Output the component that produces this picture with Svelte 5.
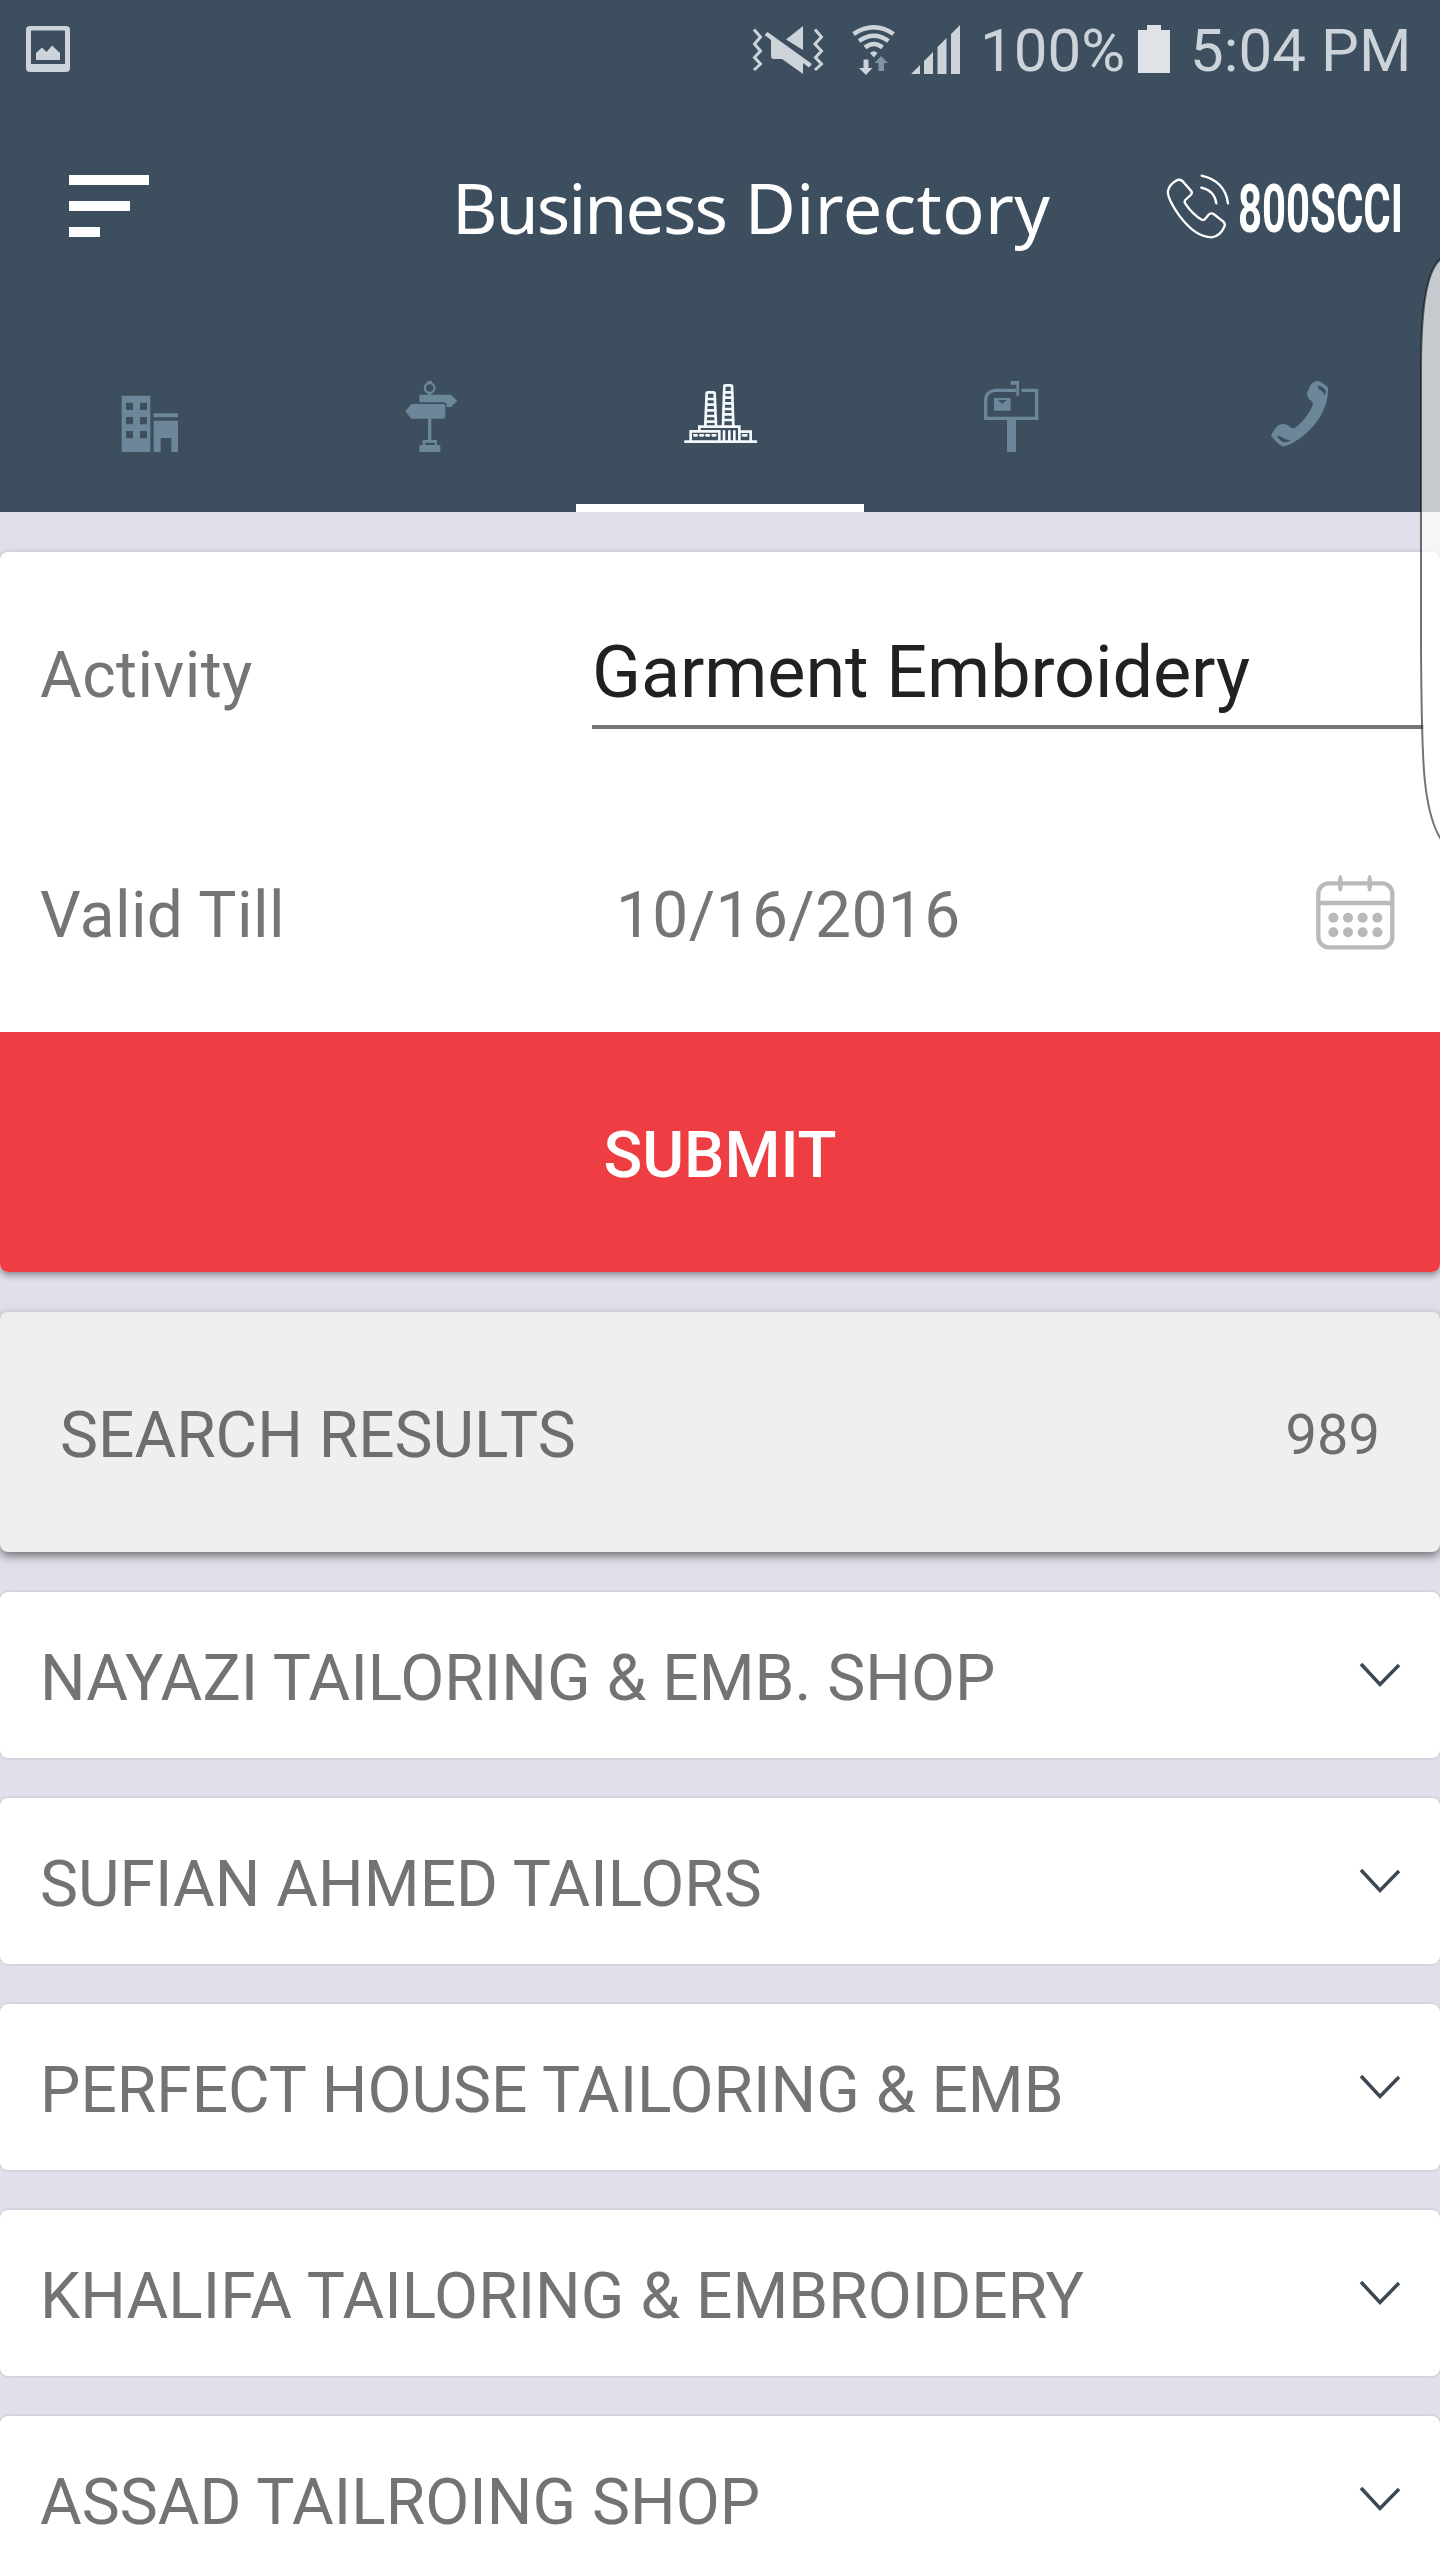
<script lang="ts">
	type TabId = 'building' | 'signpost' | 'factory' | 'mailbox' | 'phone';

	const tabs: { id: TabId; label: string; viewBox: string }[] = [
		{ id: 'building', label: 'Company', viewBox: '18 24 288 288' },
		{ id: 'signpost', label: 'Location', viewBox: '882 24 288 288' },
		{ id: 'factory', label: 'Activity', viewBox: '336 24 288 288' },
		{ id: 'mailbox', label: 'PO Box', viewBox: '30 24 288 288' },
		{ id: 'phone', label: 'Phone', viewBox: '894 24 288 288' }
	];

	const results = [
		'NAYAZI TAILORING & EMB. SHOP',
		'SUFIAN AHMED TAILORS',
		'PERFECT HOUSE TAILORING & EMB',
		'KHALIFA TAILORING & EMBROIDERY',
		'ASSAD TAILROING SHOP'
	];

	const windows = [128, 171, 213];
	const dots = [160, 204, 248, 292];

	let activeTab: TabId = $state('factory');
	let activity = $state('Garment Embroidery');
	let validTill = $state('10/16/2016');
	let total = $state(989);
</script>

<div class="screen">
	<header>
		<div class="status-bar">
			<svg class="shot" viewBox="26 26 44 46" width="44" height="46">
				<path fill-rule="evenodd" d="M30 26H66Q70 26 70 30V68Q70 72 66 72H30Q26 72 26 68V30Q26 26 30 26ZM31 30.5V64H65V30.5Z" />
				<path d="M36 60V53L42 47.5L46.5 52L52 45.5L60 53V60Z" />
			</svg>
			<div class="status-right">
				<svg viewBox="750 20 214 56" width="214" height="56">
					<g class="zigzag">
						<path d="M754 28.5L760.5 36L754.500 43L760.5 50L754.500 56.500L760.5 63L754 69" />
						<path d="M815 28.5L821.500 36L815 43L821.500 50L815.500 56.500L821.500 63L815 69" />
					</g>
					<path d="M803 25V49L786 38.500Z" />
					<path d="M764.500 34L767.500 31L812 63L809 66.500L803 62V73L782 58H774Q771 58 771 55V39Z" />
					<g class="wifi">
						<path d="M853.500 33Q874 19.500 893.500 33" />
						<path d="M859 40Q874 29.500 888.500 40" />
						<path d="M865 46.500Q874 39.500 882.500 46.500" />
					</g>
					<path d="M870 52Q874 48.500 877.500 52L874 56.500Z" />
					<path d="M863.500 58.500H868.500V67H872.500L866 74L859 67H863.500Z" />
					<path class="dim" d="M878.500 70V62H874.500L881 55L888 62H884V70Z" />
					<path d="M911 73L920 64V73ZM924 73V60L933 51V73ZM937.500 73V46L946.500 37V73ZM951 73V33L960 24V73Z" />
				</svg>
				<span class="battery-text">100%</span>
				<svg class="battery" viewBox="0 0 32 48" width="32" height="48">
					<path d="M9 0H23V5H32V48H0V5H9Z" />
				</svg>
				<span class="clock">5:04 PM</span>
			</div>
		</div>

		<div class="toolbar">
			<button class="menu" aria-label="Menu"><i></i><i></i><i></i></button>
			<h1><span>Business</span> Directory</h1>
			<svg class="hotline" viewBox="0 0 246 74" width="246" height="74">
				<g transform="translate(-22 -22) scale(.33333)" class="handset">
					<path d="M108 92Q117 86 127 93L152 121Q159 128 152 135L136 150Q132 155 136 161Q157 193 185 209Q191 212 196 206L205 195Q212 187 221 192L250 215Q257 222 253 230Q240 259 215 262Q166 262 118 197Q80 142 84 122Q88 104 108 92Z" />
					<path d="M185 77Q255 93 264 160M184 113Q224 122 229 160" />
				</g>
				<text transform="translate(76 60) scale(.635 1)">800SCCI</text>
			</svg>
		</div>

		<nav class="tabs">
			{#each tabs as tab (tab.id)}
				<button
					class="tab"
					class:active={tab.id === activeTab}
					aria-label={tab.label}
					onclick={() => (activeTab = tab.id)}
				>
					<svg viewBox={tab.viewBox} width="96" height="96">
						{#if tab.id === 'building'}
							<path fill-rule="evenodd" d="M95 107H181V276H95Z{windows.map((y) => `M108 ${y}h21v22h-21ZM150 ${y}h21v22h-21Z`).join('')}" />
							<path d="M191 160H264V172H191ZM191 182H264V276H244V234H212V276H191Z" />
						{:else if tab.id === 'signpost'}
							<circle cx="1019" cy="84" r="14.5" class="line" stroke-width="7" />
							<path d="M1012 63H1026V70H1012ZM1014 98H1024V106H1014Z" />
							<path d="M988 108Q988 104 992 104H1083L1102 122L1083 141H1070V133Q1068 127 1060 127H988Z" />
							<path d="M964 132H1058Q1066 132 1066 140V168Q1066 176 1058 176H964L946 154Z" />
							<path d="M1014 176H1024V241H1014Z" />
							<path d="M988 258Q988 255 992 255H998V244Q998 240 1002 240H1037Q1041 240 1041 244V255H1047Q1051 255 1051 259V276H988ZM1006 248V255H1034V248Z" fill-rule="evenodd" />
						{:else if tab.id === 'factory'}
							<g class="line" stroke-width="8">
								<path d="M376 245H588" />
								<path d="M392 242V214H478V242M418 211V200H538V242M542 215H572V242" />
								<path d="M436 197L440 101Q440 97 444 97H460Q464 97 464 101L468 197" />
								<path d="M489 197L493 79Q493 76 497 76H512Q516 76 516 79L520 197" />
								<path d="M440 117H465M439 134H465M439 151H466M438 168H466M437 185H467" />
								<path d="M493 97H516M492 113H517M492 130H517M491 147H518M490 163H518M490 180H519" />
								<path d="M492 214V242M508 214V242M523 214V242" />
								<path d="M403 226H410M421 226H429M439 226H447M458 226H466M549 226H559" />
							</g>
						{:else if tab.id === 'mailbox'}
							<path class="line butt" stroke-width="10" d="M199 91H135Q107 94 107 121V175H260V91H215" />
							<path d="M182 63H207V107H199V74H182Z" />
							<path fill-rule="evenodd" d="M132 114H182V152H132ZM144 120L157 131L170 120Z" />
							<path d="M171 178H198V272Q198 276 194 276H175Q171 276 171 272Z" />
						{:else}
							<path fill-rule="evenodd" d="M1101 62Q1112 63 1134 82Q1137 142 1090 198Q1047 247 1000 260Q983 253 963 227Q965 219 982 198Q997 187 1014 196Q1024 208 1035 204Q1070 178 1090 133Q1087 124 1075 115Q1068 104 1076 87Q1082 68 1101 62ZM1103 76Q1102 86 1112 91Q1121 96 1124 108L1128 94Q1124 82 1103 76ZM981 228Q991 226 1000 235Q1011 241 1024 240Q1012 248 1002 247Q990 244 981 228Z" />
						{/if}
					</svg>
				</button>
			{/each}
		</nav>
	</header>

	<main>
		<section class="card form">
			<div class="row">
				<label for="activity">Activity</label>
				<input id="activity" type="text" bind:value={activity} />
			</div>
			<div class="row">
				<span class="label">Valid Till</span>
				<span class="date">{validTill}</span>
				<svg class="calendar" viewBox="108 74 237 225" width="79" height="75">
					<g class="frame">
						<rect x="115" y="99" width="222" height="192" rx="31" />
						<path d="M115 158H337" />
					</g>
					<path d="M174 88Q176 74 181 74Q186 74 188 88V110Q186 124 181 124Q176 124 174 110ZM262 88Q264 74 269 74Q274 74 276 88V110Q274 124 269 124Q264 124 262 110Z" />
					{#each dots as x}
						<circle cx={x} cy="202" r="15" />
						<circle cx={x} cy="246" r="15" />
					{/each}
				</svg>
			</div>
			<button class="submit">SUBMIT</button>
		</section>

		<section class="card summary">
			<span class="heading">SEARCH RESULTS</span>
			<span class="total">{total}</span>
		</section>

		{#each results as name}
			<div class="card result">
				<span>{name}</span>
				<svg viewBox="0 0 42 26" width="42" height="26">
					<path d="M2 2L21 22.500L40 3" />
				</svg>
			</div>
		{/each}
	</main>

	<!-- edge panel handle, lies over header and form -->
	<svg class="edge" viewBox="0 0 22 600" width="22" height="600">
		<path d="M24 8C10 18 3 50 3 120V400C4 500 3 560 24 591Z" />
	</svg>
</div>

<style>
	:global(body) {
		background: #e0e0ea;
	}
	.screen {
		position: relative;
		width: 1440px;
		height: 2560px;
		overflow: hidden;
		background: #e0e0ea;
		font-family: Roboto, sans-serif;
		font-size: 64px;
		color: #737373;
	}
	button {
		border: none;
		padding: 0;
		background: none;
		font: inherit;
		cursor: pointer;
	}
	header {
		height: 512px;
		background: #3d4f5e;
	}

	/* ── Status bar ── */
	.status-bar {
		display: flex;
		justify-content: space-between;
		align-items: center;
		height: 98px;
		box-sizing: border-box;
		padding: 0 30px 0 26px;
		color: #ccd3d9;
		fill: #ccd3d9;
		font-size: 60px;
	}
	.status-right {
		display: flex;
		align-items: center;
	}
	.status-right span {
		line-height: 72px;
		margin-top: 4px;
		white-space: nowrap;
	}
	.zigzag,
	.wifi {
		fill: none;
		stroke: #ccd3d9;
		stroke-width: 3;
	}
	.wifi {
		stroke-width: 4.5;
	}
	.dim {
		fill: #8093a1;
	}
	.battery-text {
		margin-left: 16px;
		width: 146px;
	}
	.battery {
		margin-left: 12px;
		fill: #dfe3e7;
	}
	.clock {
		margin-left: 20px;
		width: 220px;
		letter-spacing: 0.1px;
	}

	/* ── Toolbar ── */
	.toolbar {
		display: flex;
		align-items: center;
		height: 222px;
	}
	.menu {
		display: flex;
		flex-direction: column;
		justify-content: space-between;
		margin: -6px 0 0 69px;
		width: 80px;
		height: 62px;
	}
	.menu i {
		height: 10px;
		background: #fff;
	}
	.menu i:nth-child(2) {
		width: 61px;
	}
	.menu i:nth-child(3) {
		width: 31px;
	}
	h1 {
		margin: -5px 0 0 303px;
		width: 606px;
		font-family: 'Noto Sans', sans-serif;
		font-size: 70px;
		font-weight: 400;
		line-height: 96px;
		letter-spacing: 0.4px;
		color: #fff;
		white-space: nowrap;
	}
	h1 span {
		letter-spacing: -2px;
	}
	.hotline {
		margin-left: 104px;
		overflow: visible;
		fill: #fff;
		font-size: 66px;
		font-weight: 700;
	}
	.handset {
		fill: none;
		stroke: #fff;
		stroke-width: 7;
		stroke-linecap: round;
	}

	/* ── Tabs ── */
	.tabs {
		display: grid;
		grid-template-columns: repeat(5, 1fr);
		height: 192px;
	}
	.tab {
		display: flex;
		justify-content: center;
		align-items: center;
		color: #6c8799;
		border-top: 8px solid transparent;
		border-bottom: 8px solid transparent;
	}
	.tab.active {
		color: #f4f8fb;
		border-bottom-color: #fff;
	}
	.tab svg {
		fill: currentColor;
	}
	.line {
		fill: none;
		stroke: currentColor;
		stroke-linecap: round;
	}
	.butt {
		stroke-linecap: butt;
	}

	/* ── Cards ── */
	main {
		display: flex;
		flex-direction: column;
		gap: 40px;
		padding-top: 40px;
	}
	.card {
		border-radius: 8px;
		background: #fff;
		box-shadow: 0 0 3px rgba(0, 0, 0, 0.2);
		flex-shrink: 0;
	}
	.form {
		height: 720px;
		overflow: hidden;
		color: #757575;
		box-shadow: 0 3px 7px rgba(0, 0, 0, 0.4);
	}
	.row {
		display: flex;
		align-items: center;
		height: 240px;
		padding: 0 16px 0 40px;
	}
	.row label,
	.label {
		width: 552px;
		padding-top: 6px;
		letter-spacing: 0.4px;
	}
	.row input {
		flex: 1;
		min-width: 0;
		box-sizing: border-box;
		height: 106px;
		margin-top: 8px;
		padding: 0 0 4px;
		border: none;
		border-bottom: 4px solid #757575;
		outline: none;
		font: 72px Roboto, sans-serif;
		letter-spacing: -0.1px;
		color: #212121;
		background: none;
	}
	.date {
		padding: 6px 0 0 24px;
		flex: 1;
		letter-spacing: 0.4px;
	}
	.calendar {
		margin: 0 29px 0 0;
		fill: #b9b9b9;
	}
	.frame {
		fill: none;
		stroke: #b9b9b9;
		stroke-width: 13;
	}
	.submit {
		display: block;
		width: 100%;
		height: 240px;
		padding-top: 6px;
		background: #ef3e43;
		color: #fff;
		font-weight: 500;
	}
	.summary {
		display: flex;
		justify-content: space-between;
		align-items: center;
		height: 240px;
		box-sizing: border-box;
		padding: 6px 60px 0;
		background: #efefef;
		color: #6e6e6e;
		box-shadow: 0 4px 10px rgba(0, 0, 0, 0.5);
	}
	.total {
		font-size: 56px;
	}
	.result {
		display: flex;
		justify-content: space-between;
		align-items: center;
		height: 166px;
		box-sizing: border-box;
		padding: 0 39px 0 40px;
	}
	.result span {
		padding-top: 6px;
		white-space: nowrap;
		letter-spacing: 0.03px;
	}
	.result svg {
		fill: none;
		stroke: #3d4853;
		stroke-width: 3.5;
	}

	.edge {
		position: absolute;
		top: 250px;
		right: 0;
		fill: rgba(255, 255, 255, 0.7);
		stroke: rgba(0, 0, 0, 0.55);
		stroke-width: 2;
	}
</style>
